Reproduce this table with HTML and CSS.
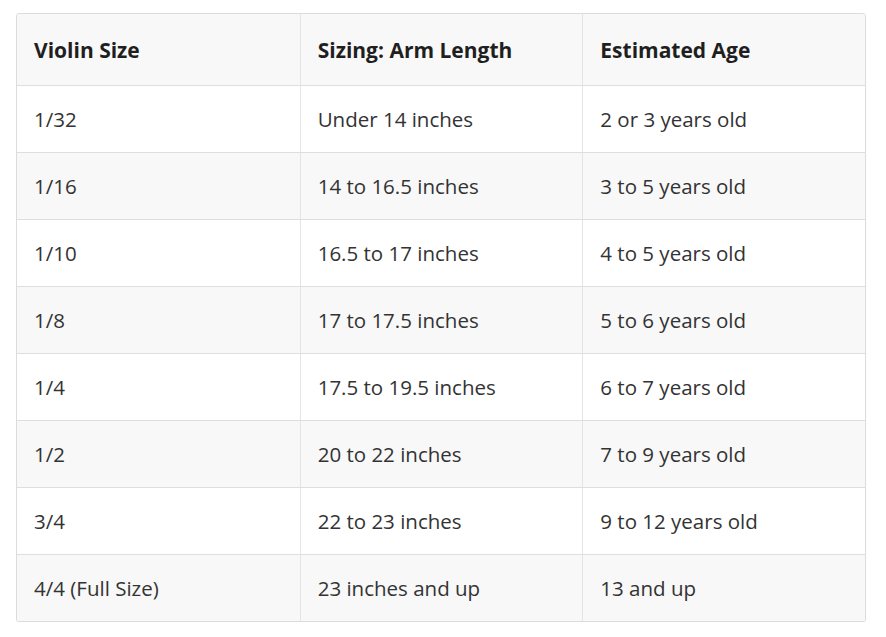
FILE: index.html
```html
<!DOCTYPE html>
<html>
<head>
<meta charset="utf-8">
<link rel="stylesheet" href="styles.css">
</head>
<body>
<div class="wrap">
<table class="sizes">
<thead>
<tr><th>Violin Size</th><th>Sizing: Arm Length</th><th>Estimated Age</th></tr>
</thead>
<tbody>
<tr><td>1/32</td><td>Under 14 inches</td><td>2 or 3 years old</td></tr>
<tr><td>1/16</td><td>14 to 16.5 inches</td><td>3 to 5 years old</td></tr>
<tr><td>1/10</td><td>16.5 to 17 inches</td><td>4 to 5 years old</td></tr>
<tr><td>1/8</td><td>17 to 17.5 inches</td><td>5 to 6 years old</td></tr>
<tr><td>1/4</td><td>17.5 to 19.5 inches</td><td>6 to 7 years old</td></tr>
<tr><td>1/2</td><td>20 to 22 inches</td><td>7 to 9 years old</td></tr>
<tr><td>3/4</td><td>22 to 23 inches</td><td>9 to 12 years old</td></tr>
<tr><td>4/4 (Full Size)</td><td>23 inches and up</td><td>13 and up</td></tr>
</tbody>
</table>
</div>
</body>
</html>
```
FILE: styles.css
```css
html, body {
  margin: 0;
  padding: 0;
  background: #fff;
}
.wrap {
  padding: 13px 20px 0 16px;
}
.sizes {
  width: 850px;
  border-collapse: separate;
  border-spacing: 0;
  border: 1px solid #dcdcdc;
  border-radius: 3px;
  box-shadow: 0 1px 1px rgba(0,0,0,0.06);
  table-layout: fixed;
  font-family: "Open Sans", "Noto Sans", sans-serif;
  color: #333;
  font-size: 20.5px;
  overflow: hidden;
}
.sizes th, .sizes td {
  text-align: left;
  padding: 0 0 0 17px;
  border-left: 1px solid #e4e4e4;
  border-top: 1px solid #dedede;
  vertical-align: middle;
}
.sizes th:first-child, .sizes td:first-child {
  border-left: none;
}
.sizes th {
  height: 71px;
  font-weight: 700;
  font-size: 21px;
  background: #f8f8f8;
  border-top: none;
  color: #1f1f1f;
}
.sizes td {
  height: 66px;
}
.sizes tbody tr:nth-child(even) td {
  background: #f8f8f8;
}
```
